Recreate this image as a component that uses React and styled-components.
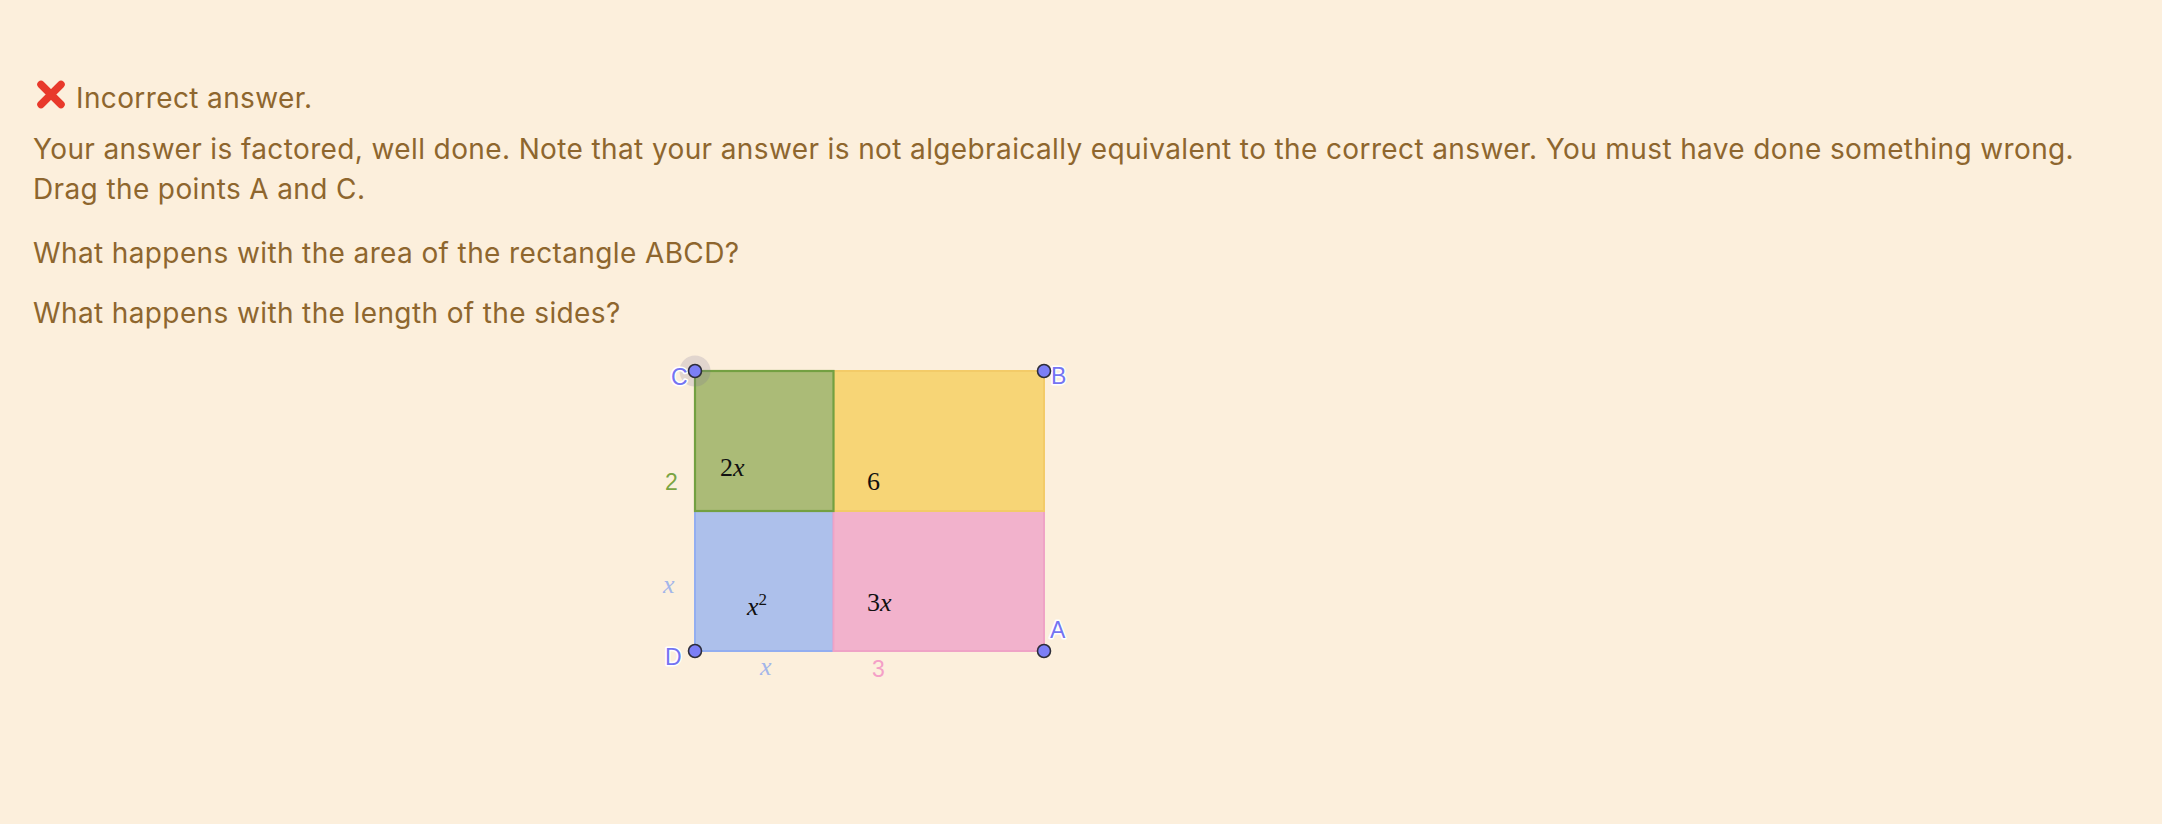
import React from "react";
import styled, { createGlobalStyle } from "styled-components";

const GlobalStyle = createGlobalStyle`
  html, body {
    margin: 0;
    padding: 0;
    background: #fcefdc;
    min-height: 100%;
  }
  body {
    font-family: Inter, "Noto Sans", "Liberation Sans", sans-serif;
  }
`;

const Page = styled.main`
  box-sizing: border-box;
  min-height: 824px;
  background: #fcefdc;
  color: #8e662e;
  padding: 78px 40px 0 33px;
  font-size: 28px;
  letter-spacing: 0.38px;
  line-height: 40.5px;
`;

const Outcome = styled.div`
  display: flex;
  align-items: flex-start;
  margin-bottom: 10px;
`;

const CrossIcon = styled.svg`
  flex: none;
  width: 30px;
  height: 29px;
  margin: 2px 10px 0 3px;
`;

const Para = styled.p`
  margin: 0 0 ${(p) => p.$gap || 0}px 0;
`;

const Applet = styled.div`
  margin: 7px 0 0 607px;
  width: 460px;
  height: 350px;
`;

const Label = styled.text`
  font-family: "Liberation Sans", Arial, sans-serif;
  font-size: 23px;
  letter-spacing: 0;
  fill: ${(p) => p.$color};
  paint-order: stroke;
  stroke: ${(p) => (p.$halo ? "#ffffff" : "none")};
  stroke-width: ${(p) => (p.$halo ? 3 : 0)}px;
  stroke-linejoin: round;
`;

const MathText = styled.text`
  font-family: "Liberation Serif", "Times New Roman", serif;
  font-size: 26px;
  letter-spacing: 0;
  fill: ${(p) => p.$color || "#111"};
`;

const Var = styled.tspan`
  font-style: italic;
`;

function Cross() {
  return (
    <CrossIcon viewBox="0 0 30 29" aria-hidden="true">
      <path
        d="M5 4.5 L25 24.5 M25 4.5 L5 24.5"
        stroke="#e8392b"
        strokeWidth="7.5"
        strokeLinecap="round"
        fill="none"
      />
    </CrossIcon>
  );
}

function Point({ x, y }) {
  return <circle cx={x} cy={y} r="6.5" fill="#7c7ff6" stroke="#2d2d3a" strokeWidth="1.6" />;
}

function Diagram() {
  const L = 55, M = 193.5, R = 404, T = 31, H = 171, B = 311;
  return (
    <svg width="460" height="350" viewBox="0 0 460 350">
      <rect x={L} y={H} width={M - L} height={B - H} fill="#adc0eb" stroke="#93aef0" strokeWidth="2" />
      <rect x={M} y={H} width={R - M} height={B - H} fill="#f2b2cc" stroke="#efa3c6" strokeWidth="2" />
      <rect x={M} y={T} width={R - M} height={H - T} fill="#f7d576" stroke="#f3cb68" strokeWidth="2" />
      <rect x={L} y={T} width={M - L} height={H - T} fill="#abbb77" stroke="#73a042" strokeWidth="2.2" />

      <MathText x="80" y="136">2<Var>x</Var></MathText>
      <MathText x="227" y="150">6</MathText>
      <MathText x="107" y="275"><Var>x</Var><tspan dy="-10" fontSize="17">2</tspan></MathText>
      <MathText x="227" y="271">3<Var>x</Var></MathText>

      <Label x="25" y="150" $color="#7aa443">2</Label>
      <MathText x="23" y="253" $color="#a3b6ea"><Var>x</Var></MathText>
      <MathText x="120" y="335" $color="#a3b6ea"><Var>x</Var></MathText>
      <Label x="232" y="337" $color="#f49fc7">3</Label>

      <circle cx={L} cy={T} r="15.5" fill="rgba(120,110,150,0.2)" />
      <Label x="31" y="45" $color="#7474f2" $halo>C</Label>
      <Label x="411" y="44" $color="#7474f2" $halo>B</Label>
      <Label x="410" y="298" $color="#7474f2" $halo>A</Label>
      <Label x="25" y="325" $color="#7474f2" $halo>D</Label>

      <Point x={L} y={T} />
      <Point x={R} y={T} />
      <Point x={L} y={B} />
      <Point x={R} y={B} />
    </svg>
  );
}

export default function App() {
  return (
    <>
      <GlobalStyle />
      <Page>
        <Outcome>
          <Cross />
          <span>Incorrect answer.</span>
        </Outcome>
        <Para $gap={23}>
          Your answer is factored, well done. Note that your answer is not algebraically equivalent to the correct answer. You must have done something wrong.
          <br />
          Drag the points A and C.
        </Para>
        <Para $gap={19.5}>What happens with the area of the rectangle ABCD?</Para>
        <Para>What happens with the length of the sides?</Para>
        <Applet>
          <Diagram />
        </Applet>
      </Page>
    </>
  );
}
